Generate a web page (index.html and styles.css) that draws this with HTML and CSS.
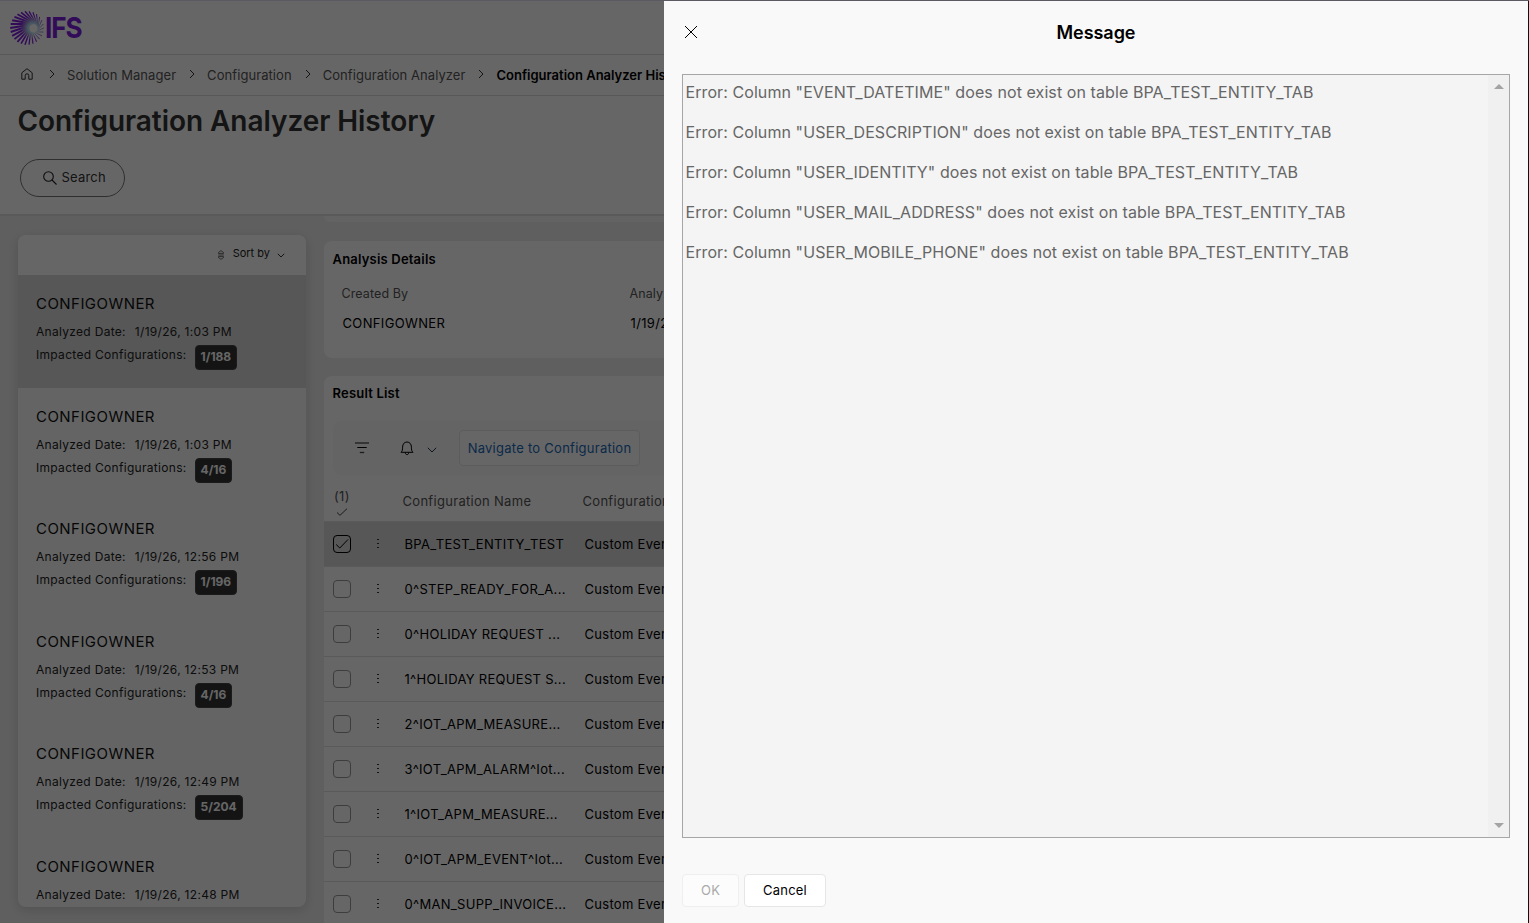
FILE: index.html
```
<!DOCTYPE html>
<html lang="en">
<head>
    <meta charset="UTF-8">
    <meta name="viewport" content="width=device-width, initial-scale=1.0">
    <title>Configuration Analyzer History</title>
    <link rel="stylesheet" href="styles.css">
</head>
<body>

    <div class="app">
        <!-- Top bar -->
        <div class="topbar">
            <svg class="logo-mark" id="logoMark" viewBox="-18 -18 36 36">
                <defs>
                    <radialGradient id="ray" gradientUnits="userSpaceOnUse" cx="6" cy="0" r="20">
                        <stop offset="0.25" stop-color="#b4dcf0"></stop>
                        <stop offset="0.45" stop-color="#9678d2"></stop>
                        <stop offset="0.65" stop-color="#7d1edc"></stop>
                    </radialGradient>
                </defs>
            </svg>
            <span class="logo-text">IFS</span>
        </div>

        <!-- Breadcrumbs -->
        <div class="breadcrumbs">
            <svg class="home" viewBox="0 0 12 12"><path d="M.8 4.8 6 .7l5.2 4.1v6.4H7.8V7.6a1.8 1.8 0 0 0-3.6 0v3.6H.8z"/></svg>
            <svg class="crumb-arrow" viewBox="0 0 6 10"><path d="M1 1l4 4-4 4"/></svg>
            <span>Solution Manager</span>
            <svg class="crumb-arrow" viewBox="0 0 6 10"><path d="M1 1l4 4-4 4"/></svg>
            <span>Configuration</span>
            <svg class="crumb-arrow" viewBox="0 0 6 10"><path d="M1 1l4 4-4 4"/></svg>
            <span>Configuration Analyzer</span>
            <svg class="crumb-arrow" viewBox="0 0 6 10"><path d="M1 1l4 4-4 4"/></svg>
            <span class="current">Configuration Analyzer History</span>
        </div>

        <!-- Page heading -->
        <div class="page-head">
            <h1>Configuration Analyzer History</h1>
            <button class="search-btn">
                <svg viewBox="0 0 14 14"><circle cx="5.5" cy="5.5" r="4.8"/><path d="M9 9l4.5 4.5"/></svg>
                Search
            </button>
        </div>

        <div class="content">
            <!-- Runs -->
            <div class="runs">
                <div class="sort">
                    <svg class="sort-icon" viewBox="0 0 6 10"><path d="M.5 3.4v-.9L3 .6l2.5 1.9v.9zM.5 6.6v.9L3 9.4l2.5-1.9v-.9zM.3 5h5.4"/></svg>
                    <span>Sort by</span>
                    <svg class="sort-arrow" viewBox="0 0 8 5"><path d="M.8.8 4 4 7.2.8"/></svg>
                </div>
                <div class="run selected">
                    <div class="owner">CONFIGOWNER</div>
                    <div class="line"><span>Analyzed Date:</span><span>1/19/26, 1:03 PM</span></div>
                    <div class="line"><span>Impacted Configurations:</span><b class="badge">1/188</b></div>
                </div>
                <div class="run">
                    <div class="owner">CONFIGOWNER</div>
                    <div class="line"><span>Analyzed Date:</span><span>1/19/26, 1:03 PM</span></div>
                    <div class="line"><span>Impacted Configurations:</span><b class="badge">4/16</b></div>
                </div>
                <div class="run">
                    <div class="owner">CONFIGOWNER</div>
                    <div class="line"><span>Analyzed Date:</span><span>1/19/26, 12:56 PM</span></div>
                    <div class="line"><span>Impacted Configurations:</span><b class="badge">1/196</b></div>
                </div>
                <div class="run">
                    <div class="owner">CONFIGOWNER</div>
                    <div class="line"><span>Analyzed Date:</span><span>1/19/26, 12:53 PM</span></div>
                    <div class="line"><span>Impacted Configurations:</span><b class="badge">4/16</b></div>
                </div>
                <div class="run">
                    <div class="owner">CONFIGOWNER</div>
                    <div class="line"><span>Analyzed Date:</span><span>1/19/26, 12:49 PM</span></div>
                    <div class="line"><span>Impacted Configurations:</span><b class="badge">5/204</b></div>
                </div>
                <div class="run">
                    <div class="owner">CONFIGOWNER</div>
                    <div class="line"><span>Analyzed Date:</span><span>1/19/26, 12:48 PM</span></div>
                </div>
            </div>

            <div class="main">
                <div class="card-end"></div>

                <!-- Analysis details -->
                <div class="card details">
                    <h2>Analysis Details</h2>
                    <div class="fields">
                        <div class="field">
                            <label>Created By</label>
                            <div class="value">CONFIGOWNER</div>
                        </div>
                        <div class="field">
                            <label>Analyzed Date</label>
                            <div class="value">1/19/26, 1:03 PM</div>
                        </div>
                    </div>
                </div>

                <!-- Result list -->
                <div class="card results">
                    <h2>Result List</h2>
                    <div class="toolbar">
                        <svg class="filter" viewBox="0 0 14 12"><path class="filter-top" d="M0 1h14"/><path d="M2.3 5.5h9.4"/><path class="filter-top" d="M4.8 10.5h4.4"/></svg>
                        <svg class="bell" viewBox="0 0 14 15"><path d="M1 11.3c1.3-1.2 1.6-2.5 1.6-5.2C2.6 3 4.4 1 7 1s4.4 2 4.4 5.1c0 2.7.3 4 1.6 5.2zM5.3 11.6c0 1.2.7 2 1.7 2s1.7-.8 1.7-2"/></svg>
                        <svg class="bell-arrow" viewBox="0 0 10 6"><path d="M.8.8 5 5 9.2.8"/></svg>
                        <button class="nav-btn">Navigate to Configuration</button>
                    </div>
                    <div class="row head">
                        <span class="count">(1)<svg viewBox="0 0 12 8"><path d="M1 4.5 4 7.3 11 .7"/></svg></span>
                        <span></span>
                        <span>Configuration Name</span>
                        <span>Configuration Type</span>
                    </div>
                    <div class="row selected">
                        <span class="check on"><svg viewBox="0 0 14 12"><path d="M1.2 6.5 4.8 10 13 1.5"/></svg></span>
                        <i class="dots"></i><span>BPA_TEST_ENTITY_TEST</span><span>Custom Event</span>
                    </div>
                    <div class="row"><span class="check"></span><i class="dots"></i><span>0^STEP_READY_FOR_A...</span><span>Custom Event</span></div>
                    <div class="row"><span class="check"></span><i class="dots"></i><span>0^HOLIDAY REQUEST ...</span><span>Custom Event</span></div>
                    <div class="row"><span class="check"></span><i class="dots"></i><span>1^HOLIDAY REQUEST S...</span><span>Custom Event</span></div>
                    <div class="row"><span class="check"></span><i class="dots"></i><span>2^IOT_APM_MEASURE...</span><span>Custom Event</span></div>
                    <div class="row"><span class="check"></span><i class="dots"></i><span>3^IOT_APM_ALARM^Iot...</span><span>Custom Event</span></div>
                    <div class="row"><span class="check"></span><i class="dots"></i><span>1^IOT_APM_MEASURE...</span><span>Custom Event</span></div>
                    <div class="row"><span class="check"></span><i class="dots"></i><span>0^IOT_APM_EVENT^Iot...</span><span>Custom Event</span></div>
                    <div class="row"><span class="check"></span><i class="dots"></i><span>0^MAN_SUPP_INVOICE...</span><span>Custom Event</span></div>
                </div>
            </div>
        </div>
    </div>

    <!-- Message dialog -->
    <div class="overlay">
        <div class="dialog">
            <div class="dialog-head">
                <svg class="close" viewBox="0 0 14 14"><path d="M1 1l12 12M13 1 1 13"/></svg>
                <h3>Message</h3>
            </div>
            <div class="message">
                <div class="message-text">
                    <p>Error: Column "EVENT_DATETIME" does not exist on table BPA_TEST_ENTITY_TAB</p>
                    <p>Error: Column "USER_DESCRIPTION" does not exist on table BPA_TEST_ENTITY_TAB</p>
                    <p>Error: Column "USER_IDENTITY" does not exist on table BPA_TEST_ENTITY_TAB</p>
                    <p>Error: Column "USER_MAIL_ADDRESS" does not exist on table BPA_TEST_ENTITY_TAB</p>
                    <p>Error: Column "USER_MOBILE_PHONE" does not exist on table BPA_TEST_ENTITY_TAB</p>
                </div>
                <div class="scrollbar">
                    <svg viewBox="0 0 10 5"><path d="M0 5 5 0l5 5z"/></svg>
                    <svg viewBox="0 0 10 5"><path d="M0 0h10L5 5z"/></svg>
                </div>
            </div>
            <div class="dialog-buttons">
                <button class="btn" disabled>OK</button>
                <button class="btn">Cancel</button>
            </div>
        </div>
    </div>

    <script>
        // Rays of the logo, thicker on the left side and twisted around an off-centre hub
        const mark = document.getElementById('logoMark');
        const count = 26;
        for (let i = 0; i < count; i++) {
            const a = i * 2 * Math.PI / count;
            const ray = document.createElementNS('http://www.w3.org/2000/svg', 'line');
            ray.setAttribute('x1', 6.5 + 4.5 * Math.cos(a + 0.8));
            ray.setAttribute('y1', 4.5 * Math.sin(a + 0.8));
            ray.setAttribute('x2', 16.8 * Math.cos(a));
            ray.setAttribute('y2', 16.8 * Math.sin(a));
            ray.setAttribute('stroke', 'url(#ray)');
            ray.setAttribute('stroke-width', 1.4 - 0.6 * Math.cos(a));
            mark.appendChild(ray);
        }
    </script>

</body>
</html>
```
FILE: styles.css
```
* {
    box-sizing: border-box;
}

body {
    margin: 0;
    height: 923px;
    overflow: hidden;
    font-family: 'Inter', sans-serif;
    font-size: 13px;
    letter-spacing: 0.2px;
    color: #000;
    background-color: #eee;
}

h1, h2, h3, p {
    margin: 0;
}

button {
    font-family: inherit;
    letter-spacing: inherit;
}

svg {
    display: block;
    flex: none;
    fill: none;
    stroke: #000;
}

.app {
    height: 923px;
    overflow: hidden;
}

/* Top bar */
.topbar {
    display: flex;
    align-items: center;
    height: 55px;
    padding-left: 8.5px;
    border-top: 1px solid #e4e0f5;
    border-bottom: 1px solid #dcdcdc;
    background-color: #fff;
}

.logo-mark {
    width: 36px;
    height: 36px;
}

.logo-text {
    margin-left: 0.5px;
    font-size: 29px;
    font-weight: 700;
    letter-spacing: -1.2px;
    color: #7d1edc;
    transform: scaleX(0.9);
    transform-origin: left;
}

/* Breadcrumbs */
.breadcrumbs {
    display: flex;
    align-items: center;
    height: 41px;
    padding-left: 21px;
    border-bottom: 1px solid #dcdcdc;
    background-color: #fff;
    letter-spacing: 0.07px;
    color: #555;
    white-space: nowrap;
}

.home {
    width: 12px;
    height: 12px;
    margin-top: -2px;
    stroke: #333;
}

.crumb-arrow {
    width: 6px;
    height: 10px;
    margin: -2px 12px 0 13px;
    stroke: #333;
}

.home + .crumb-arrow {
    margin-left: 16px;
}

.current {
    font-weight: 600;
    letter-spacing: 0;
    color: #000;
}

/* Heading */
.page-head {
    height: 120px;
    padding: 7px 17.5px 0;
    border-bottom: 2px solid #e0e0e0;
    background-color: #fff;
}

.page-head h1 {
    font-size: 28px;
    font-weight: 600;
    letter-spacing: -0.05px;
    line-height: 36px;
    color: #333;
}

.search-btn {
    display: flex;
    align-items: center;
    gap: 5px;
    width: 105px;
    height: 38px;
    margin: 20px 0 0 2.5px;
    padding: 0 0 2px 21.5px;
    border: 1px solid #777;
    border-radius: 19px;
    background-color: #fff;
    font-size: 13px;
    color: #333;
}

.search-btn svg {
    width: 14px;
    height: 14px;
    margin-top: 1px;
    stroke: #222;
    stroke-width: 1.1;
}

.content {
    display: flex;
    gap: 18px;
    height: 707px;
    padding-left: 18px;
}

/* List of runs */
.runs {
    width: 288px;
    height: 672px;
    margin-top: 19px;
    border-radius: 8px;
    overflow: hidden;
    background-color: #fbfbfb;
    box-shadow: 0 3px 12px rgba(0, 0, 0, 0.15);
}

.sort {
    display: flex;
    justify-content: flex-end;
    align-items: center;
    height: 40px;
    padding: 0 21px 4px 0;
    background-color: #fff;
    font-size: 11px;
    letter-spacing: 0;
    color: #222;
}

.sort-icon {
    width: 6px;
    height: 10px;
    margin: 3px 9px 0 0;
    stroke: #333;
    stroke-width: 0.7;
}

.sort-arrow {
    width: 8px;
    height: 5px;
    margin: 4px 0 0 7px;
    stroke: #333;
}

.run {
    height: 112.6px;
    padding: 18px 18px 0;
    font-size: 12px;
    letter-spacing: 0.3px;
    color: #222;
}

.run.selected {
    background-color: #d9d9d9;
}

.owner {
    height: 29px;
    line-height: 21px;
    font-size: 15px;
    letter-spacing: 0.45px;
    color: #111;
}

.line {
    display: flex;
    gap: 9px;
    height: 23px;
    line-height: 20px;
    white-space: nowrap;
}

.badge {
    height: 25px;
    margin-left: -1px;
    padding: 0 5px;
    border: 1px solid #444;
    border-radius: 4px;
    line-height: 22px;
    letter-spacing: 0;
    background-color: #333;
    color: #fff;
}

/* Right side cards */
.main {
    flex: 1;
}

.card-end {
    height: 6px;
    border-radius: 0 0 8px 8px;
    background-color: #f7f7f7;
}

.card {
    border-radius: 8px;
    background-color: #fff;
}

.card h2 {
    padding-left: 8.5px;
    font-size: 13px;
    font-weight: 600;
    line-height: 18px;
}

.details {
    height: 117px;
    margin: 19px 0 18px;
    padding-top: 9px;
}

.fields {
    display: flex;
    padding: 17px 0 0 17.5px;
}

.field {
    width: 288px;
}

.field label {
    display: block;
    line-height: 18px;
    font-size: 12.5px;
    letter-spacing: 0.1px;
    color: #555;
}

.value {
    margin: 11px 0 0 1px;
    line-height: 18px;
    letter-spacing: 0.35px;
}

.results {
    height: 560px;
    padding-top: 8px;
}

.toolbar {
    display: flex;
    align-items: center;
    height: 54px;
    margin: 19px 9px 0;
    padding-left: 22px;
    border-radius: 8px;
    background-color: #f9f9f9;
}

.filter {
    width: 14px;
    height: 12px;
}

.filter-top {
    stroke: #444;
    stroke-width: 1.3;
}

.bell {
    width: 14px;
    height: 15px;
    margin-left: 31px;
}

.bell-arrow {
    width: 10px;
    height: 6px;
    margin: 4px 0 0 13px;
    stroke: #234;
}

.nav-btn {
    width: 181px;
    height: 36px;
    margin-left: 22px;
    padding: 0;
    border: 1px solid #e6e6e6;
    border-radius: 4px;
    background-color: #fff;
    font-size: 13px;
    letter-spacing: 0.26px;
    color: #1a69b8;
}

.row {
    display: grid;
    grid-template-columns: 44px 26px 180px 1fr;
    align-items: center;
    height: 45px;
    padding-left: 9px;
    border-bottom: 1px solid #e0e0e0;
    letter-spacing: 0.3px;
    white-space: nowrap;
}

.row > span:nth-child(n+3) {
    padding-left: 1.5px;
}

.row.head {
    height: 47px;
    padding: 5px 0 0 9px;
    color: #555;
}

.row.head > span:nth-child(n+3) {
    margin-left: -2px;
}

.row.selected {
    background-color: #d9d9d9;
}

.count {
    padding: 2px 0 0 1px;
    line-height: 17px;
}

.count svg {
    width: 12px;
    height: 8px;
    margin: 3px 0 0 2px;
    stroke: #444;
}

.check {
    display: flex;
    align-items: center;
    justify-content: center;
    width: 18px;
    height: 18px;
    border: 1px solid #999;
    border-radius: 4px;
}

.check.on {
    border-color: #000;
}

.check svg {
    width: 14px;
    height: 12px;
}

.dots {
    width: 2px;
    height: 10px;
    background: repeating-linear-gradient(#333 0 1.5px, transparent 1.5px 4px);
}

/* Dialog */
.overlay {
    position: absolute;
    inset: 0;
    display: flex;
    justify-content: flex-end;
    padding-top: 1px;
    background-color: rgba(0, 0, 0, 0.6);
}

.dialog {
    display: flex;
    flex-direction: column;
    width: 865px;
    height: 922px;
    padding: 0 18px;
    border-right: 1px solid #111;
    background-color: #f9f9f9;
}

.dialog-head {
    display: flex;
    align-items: center;
    height: 73px;
    padding: 0 16px 11px 2px;
}

.dialog-head h3 {
    flex: 1;
    font-size: 18px;
    font-weight: 600;
    letter-spacing: -0.05px;
    text-align: center;
}

.close {
    width: 14px;
    height: 14px;
}

.message {
    display: flex;
    height: 764px;
    border: 1px solid #a6a6a6;
    background-color: #f4f4f4;
}

.message-text {
    flex: 1;
    padding: 7px 2.5px;
}

.message-text p {
    height: 40px;
    line-height: 20px;
    font-size: 16px;
    letter-spacing: 0.083px;
    color: #666;
    white-space: nowrap;
}

.scrollbar {
    display: flex;
    flex-direction: column;
    justify-content: space-between;
    align-items: center;
    width: 21px;
    padding: 9px 0;
    background-color: #f0f0f0;
}

.scrollbar svg {
    width: 10px;
    height: 5px;
    stroke: none;
    fill: #a3a3a3;
}

.dialog-buttons {
    display: flex;
    gap: 5px;
    margin-top: 36px;
}

.btn {
    height: 33px;
    padding: 0 18px 2px;
    border: 1px solid #e6e6e6;
    border-radius: 4px;
    background-color: #fff;
    font-size: 13px;
    color: #000;
}

.btn:disabled {
    border-color: #efefef;
    background-color: #fcfcfc;
    color: #aaa;
}
```
